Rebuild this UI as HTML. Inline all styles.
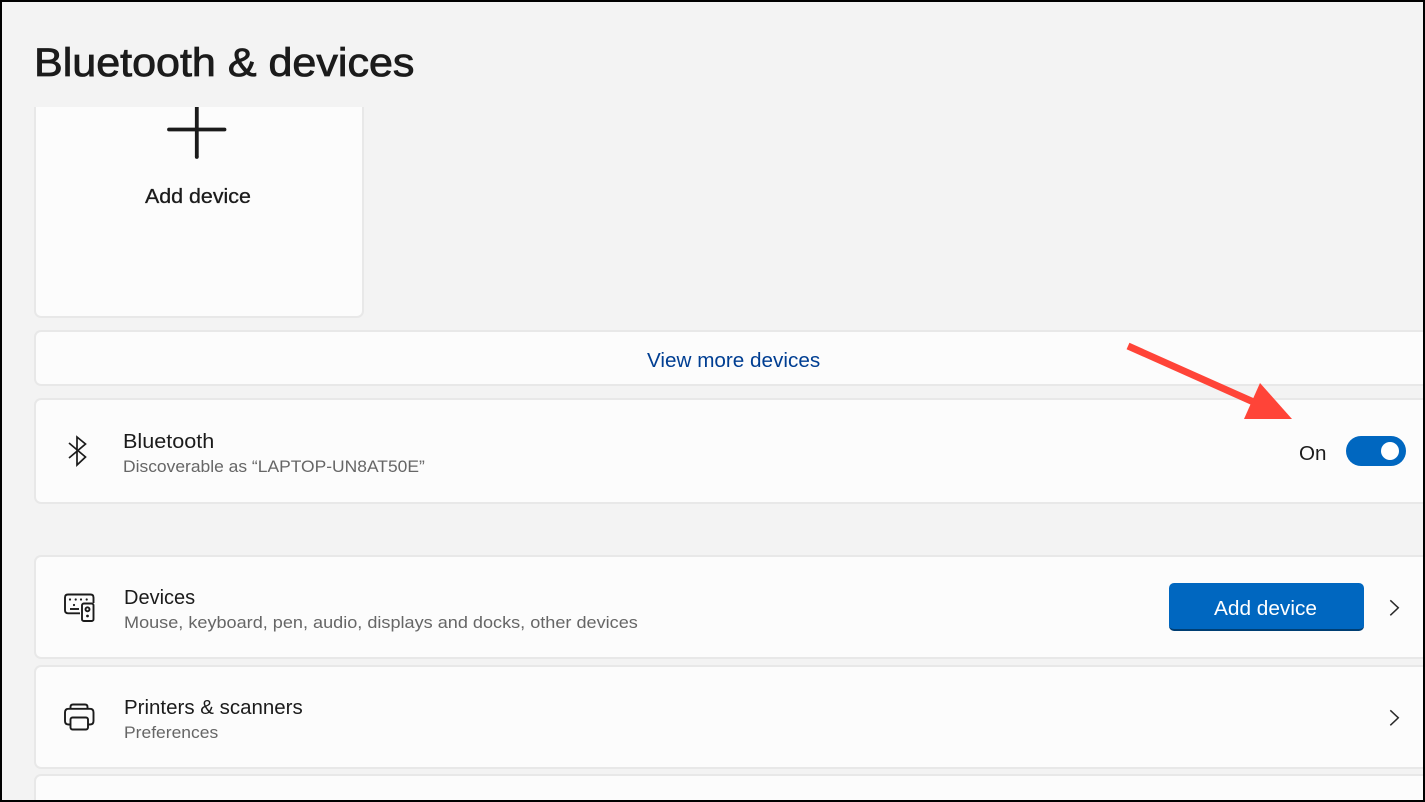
<!DOCTYPE html>
<html lang="en">
<head>
<meta charset="utf-8">
<title>Bluetooth &amp; devices</title>
<style>
html,body{margin:0;padding:0;background:#000;overflow:hidden;}
body{width:1425px;height:802px;position:relative;font-family:"Liberation Sans",Arial,sans-serif;}
#page{position:absolute;left:2px;top:2px;width:1421px;height:798px;background:#f3f3f3;overflow:hidden;}
.card{position:absolute;box-sizing:border-box;background:#fcfcfc;border:2px solid #e8e8e8;border-right:none;border-radius:7px 0 0 7px;left:32px;width:1389px;}
.t{position:absolute;white-space:nowrap;line-height:1;color:#1b1b1b;transform-origin:0 50%;}
.sub{color:#666;font-size:17px;}
.main{font-size:20px;}
svg{position:absolute;}
</style>
</head>
<body>
<div id="page">
  <div class="t" style="left:32px;top:41px;font-size:40px;-webkit-text-stroke:.8px #1b1b1b;transform:scaleX(1.076);">Bluetooth &amp; devices</div>

  <div style="position:absolute;left:0;top:105px;width:1421px;height:693px;overflow:hidden;">
    <div class="card" style="top:0;width:330px;height:211px;border:2px solid #e8e8e8;border-top:none;border-radius:0 0 7px 7px;"></div>
    <div class="card" style="top:223px;height:56px;"></div>
    <div class="card" style="top:291px;height:106px;"></div>
    <div class="card" style="top:448px;height:104px;"></div>
    <div class="card" style="top:558px;height:104px;"></div>
    <div class="card" style="top:667px;height:26px;border-bottom:none;border-radius:7px 0 0 0;"></div>
  </div>

  <svg style="left:0;top:0" width="1421" height="798" viewBox="2 2 1421 798">
    <path d="M196.800 107V157" fill="none" stroke="#1b1b1b" stroke-width="3.800"/>
    <circle cx="196.800" cy="157" r="1.900" fill="#1b1b1b"/>
    <path d="M169 129.500H224.500" fill="none" stroke="#1b1b1b" stroke-width="3.800" stroke-linecap="round"/>

    <path d="M69 443L85.500 457L77 465V437L85.500 444L69 458" fill="none" stroke="#1b1b1b" stroke-width="1.700"/>

    <g fill="none" stroke="#1b1b1b" stroke-width="1.900">
      <path d="M80 613.300H68Q65 613.300 65 610.300V597.500Q65 594.500 68 594.500H90.500Q93.500 594.500 93.500 597.500V603"/>
      <rect x="82" y="603.500" width="11.500" height="17.500" rx="1.800"/>
      <circle cx="87.500" cy="609.300" r="2"/>
      <path d="M70 609H79"/>
    </g>
    <g fill="#1b1b1b">
      <circle cx="70" cy="599.500" r="1.100"/><circle cx="75.700" cy="599.500" r="1.100"/><circle cx="81" cy="599.500" r="1.100"/><circle cx="86.700" cy="599.500" r="1.100"/>
      <circle cx="74" cy="605" r="1.100"/><circle cx="87.500" cy="616" r="1.400"/>
    </g>

    <g fill="none" stroke="#1b1b1b" stroke-width="1.900">
      <path d="M70.500 708.500V707Q70.500 704.500 73 704.500H85Q87.500 704.500 87.500 707V708.500"/>
      <path d="M70 724.500H68.500Q65 724.500 65 721V712.500Q65 708.800 68.500 708.800H90Q93.500 708.800 93.500 712.500V721Q93.500 724.500 90 724.500H88"/>
      <rect x="70.500" y="717.500" width="17.500" height="12" rx="2"/>
    </g>

    <path d="M1390.300 600.300L1398.300 607.800L1390.300 615.300M1390.300 710.300L1398.300 717.800L1390.300 725.300" fill="none" stroke="#2a2a2a" stroke-width="1.500"/>

    <path d="M1128 346L1258 404" fill="none" stroke="#ff4438" stroke-width="7"/>
    <path d="M1260 383L1292 419H1244Z" fill="#ff4438"/>
  </svg>

  <div class="t" style="left:143px;top:185px;font-size:20px;-webkit-text-stroke:.3px #1b1b1b;transform:scaleX(1.07);">Add device</div>
  <div class="t" style="left:645px;top:349px;font-size:20px;color:#003e92;transform:scaleX(1.034);">View more devices</div>

  <div class="t main" style="left:121px;top:430px;transform:scaleX(1.08);">Bluetooth</div>
  <div class="t sub" style="left:121px;top:456px;transform:scaleX(1.026);">Discoverable as “LAPTOP-UN8AT50E”</div>
  <div class="t" style="left:1297px;top:442px;font-size:20px;transform:scaleX(1.03);">On</div>
  <div style="position:absolute;left:1344px;top:434px;width:60px;height:30px;border-radius:15px;background:#0067c0;"></div>
  <div style="position:absolute;left:1379px;top:440px;width:18px;height:18px;border-radius:50%;background:#fff;"></div>

  <div class="t main" style="left:122px;top:586px;">Devices</div>
  <div class="t sub" style="left:122px;top:612px;transform:scaleX(1.064);">Mouse, keyboard, pen, audio, displays and docks, other devices</div>
  <div style="position:absolute;box-sizing:border-box;left:1167px;top:581px;width:195px;height:48px;border-radius:5px;background:#0067c0;border-bottom:2px solid #003e73;"></div>
  <div class="t" style="left:1212px;top:597px;font-size:20px;color:#fff;transform:scaleX(1.04);">Add device</div>

  <div class="t main" style="left:122px;top:696px;transform:scaleX(1.024);">Printers &amp; scanners</div>
  <div class="t sub" style="left:122px;top:722px;transform:scaleX(1.028);">Preferences</div>
</div>
</body>
</html>
